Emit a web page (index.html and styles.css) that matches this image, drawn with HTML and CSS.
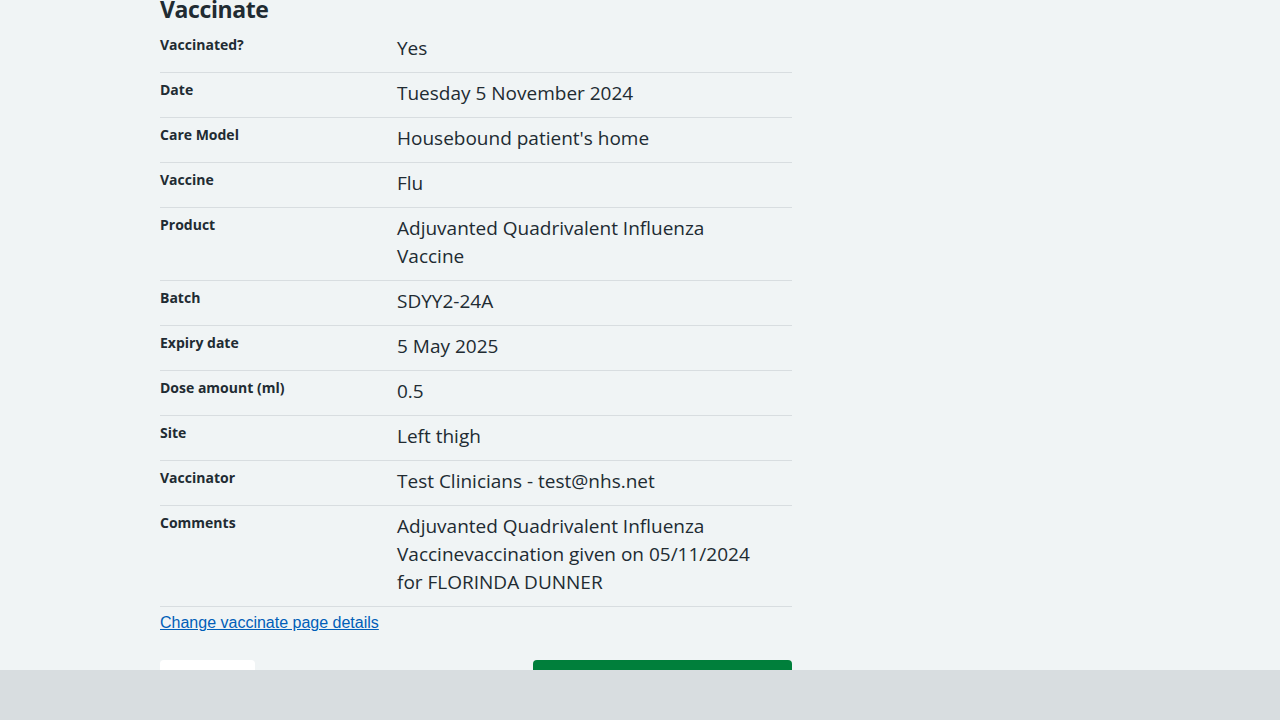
FILE: index.html
```html
<!DOCTYPE html>
<html lang="en">
<head>
<meta charset="utf-8">
<title>Vaccinate</title>
<link rel="stylesheet" href="styles.css">
</head>
<body>
<main class="page">
  <h2 class="heading">Vaccinate</h2>
  <dl class="summary">
    <div class="row"><dt class="key">Vaccinated?</dt><dd class="value">Yes</dd></div>
    <div class="row"><dt class="key">Date</dt><dd class="value">Tuesday 5 November 2024</dd></div>
    <div class="row"><dt class="key">Care Model</dt><dd class="value">Housebound patient's home</dd></div>
    <div class="row"><dt class="key">Vaccine</dt><dd class="value">Flu</dd></div>
    <div class="row"><dt class="key">Product</dt><dd class="value">Adjuvanted Quadrivalent Influenza Vaccine</dd></div>
    <div class="row"><dt class="key">Batch</dt><dd class="value">SDYY2-24A</dd></div>
    <div class="row"><dt class="key">Expiry date</dt><dd class="value">5 May 2025</dd></div>
    <div class="row"><dt class="key">Dose amount (ml)</dt><dd class="value">0.5</dd></div>
    <div class="row"><dt class="key">Site</dt><dd class="value">Left thigh</dd></div>
    <div class="row"><dt class="key">Vaccinator</dt><dd class="value">Test Clinicians - test@nhs.net</dd></div>
    <div class="row"><dt class="key">Comments</dt><dd class="value">Adjuvanted Quadrivalent Influenza Vaccinevaccination given on 05/11/2024 for FLORINDA DUNNER</dd></div>
  </dl>
  <a class="change-link" href="#">Change vaccinate page details</a>
  <div class="actions">
    <button class="btn btn-secondary" type="button">Back</button>
    <button class="btn btn-primary" type="button">Confirm and save</button>
  </div>
</main>
<footer class="footer"></footer>
</body>
</html>
```
FILE: styles.css
```css
html, body {
  margin: 0;
  padding: 0;
}
body {
  background: #f0f4f5;
  color: #212b32;
  font-family: "Open Sans", "Noto Sans", sans-serif;
  height: 720px;
  overflow: hidden;
}
.page {
  width: 632px;
  margin-left: 160px;
}
.heading {
  font-size: 23px;
  line-height: 18px;
  font-weight: 700;
  letter-spacing: -0.4px;
  margin: 0 0 10px 0;
}
.summary {
  margin: 0;
  padding: 0;
}
.row {
  display: grid;
  grid-template-columns: 237px 1fr;
  border-bottom: 1px solid #d8dde0;
}
.key {
  font-size: 14px;
  line-height: 24px;
  font-weight: 700;
  padding: 5px 0 8px 0;
  margin: 0;
}
.value {
  font-size: 19px;
  line-height: 28px;
  padding: 6px 24px 10px 0;
  margin: 0;
}
.change-link {
  display: inline-block;
  margin-top: 5px;
  font-family: "Liberation Sans", Arial, sans-serif;
  font-size: 16px;
  line-height: 22px;
  color: #005eb8;
  text-decoration: underline;
}
.actions {
  display: flex;
  justify-content: space-between;
  margin-top: 26px;
}
.btn {
  border: none;
  border-radius: 4px;
  height: 52px;
  font-family: "Open Sans", sans-serif;
  font-size: 19px;
  font-weight: 600;
  padding: 0 16px;
}
.btn-secondary {
  background: #ffffff;
  color: #005eb8;
  width: 95px;
}
.btn-primary {
  background: #007f3b;
  color: #ffffff;
  width: 259px;
}
.footer {
  position: fixed;
  left: 0;
  right: 0;
  bottom: 0;
  height: 50px;
  background: #d8dde0;
}
```
